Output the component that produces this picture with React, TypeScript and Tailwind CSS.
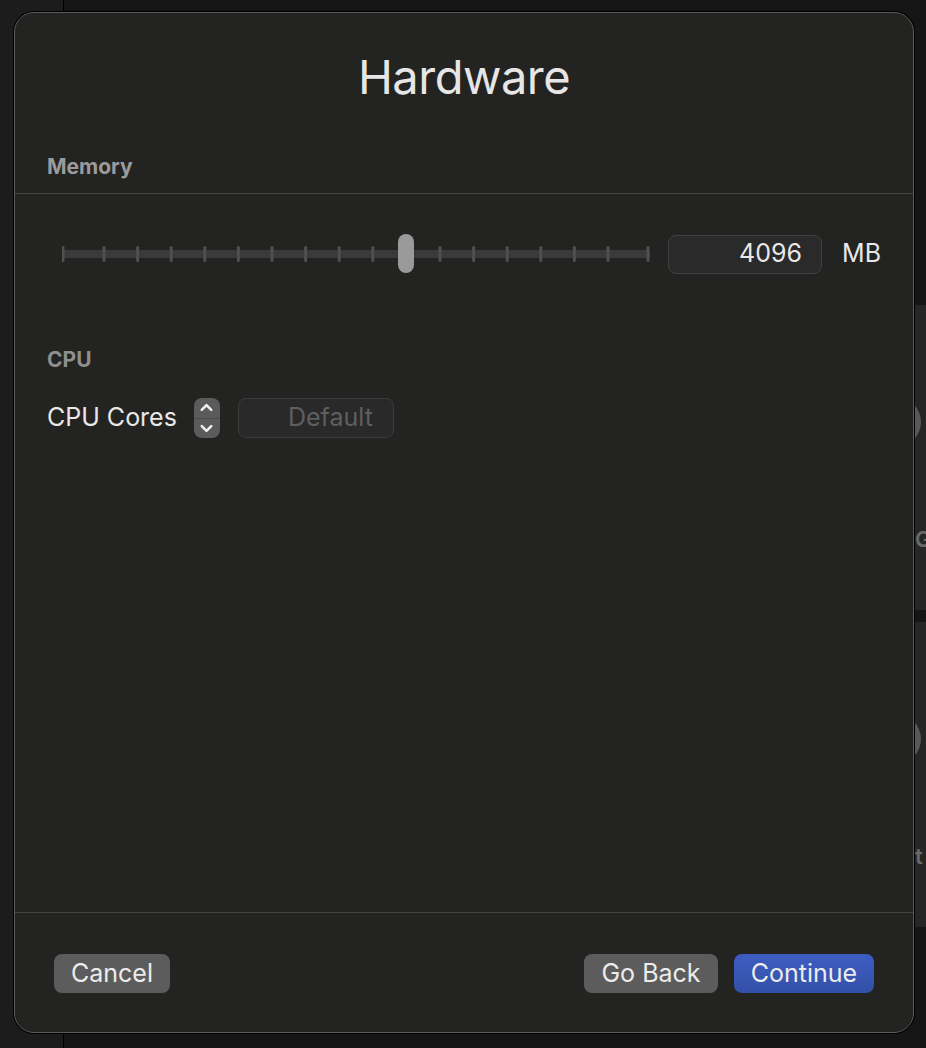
import { ChevronDown, ChevronUp } from "lucide-react";

const TICKS = [1, ...Array.from({ length: 16 }, (_, i) => 42 + i * 33.6), 586];

const MemorySlider = () => {
  return (
    <svg width="588" height="40" viewBox="0 0 588 40" className="ml-[15px] shrink-0">
      <rect x="0" y="16" width="588" height="8" rx="2" fill="#3a3a3a" />
      {TICKS.map((x, i) =>
        i === 10 ? null : (
          <rect key={i} x={x - 1.5} y="12" width="3" height="16" rx="1.5" fill="#505050" />
        )
      )}
      <rect x="336" y="0" width="16" height="39" rx="8" fill="#9a9a9a" />
    </svg>
  );
};

const Stepper = () => {
  return (
    <div className="flex h-[40px] w-[26px] flex-col overflow-hidden rounded-[8px] bg-[#5b5b5b] text-[#f0f0f0]">
      <div className="flex flex-1 items-center justify-center border-b border-[#4a4a4a]">
        <ChevronUp size={19} strokeWidth={3.2} />
      </div>
      <div className="flex flex-1 items-center justify-center">
        <ChevronDown size={19} strokeWidth={3.2} />
      </div>
    </div>
  );
};

const BackgroundCard = ({ letter, top }: { letter: string; top: string }) => {
  return (
    <div className={`mr-[-14px] flex h-[305px] w-[100px] flex-col rounded-l-xl bg-[#262626] ${top}`}>
      <div className="ml-[31px] mt-[92px] h-[50px] w-[50px] rounded-full bg-[#595959]" />
      <span className="ml-[75px] mt-[76px] text-[22px] font-semibold text-[#6a6a6a]">{letter}</span>
    </div>
  );
};

export default function App() {
  return (
    <div className="relative h-[1048px] w-[926px] overflow-hidden bg-[#151515] font-['Inter',sans-serif]">
      <div className="flex h-full">
        <div className="w-[64px] border-r border-black bg-[#1c1c1c]" />
        <div className="flex flex-1 flex-col items-end pt-[305px]">
          <BackgroundCard letter="G" top="" />
          <BackgroundCard letter="t" top="mt-[12px]" />
        </div>
      </div>

      <div className="absolute left-[14px] top-[12px] flex h-[1021px] w-[900px] flex-col rounded-[20px] border border-[#5a5a5a] bg-[#232322] shadow-[0_0_0_1px_#000]">
        <h1 className="pt-[36px] text-center text-[47px] leading-[56px] tracking-[-0.5px] text-[#e6e6e6]">
          Hardware
        </h1>

        <div className="mt-[48px] px-[32px] text-[21px] font-bold leading-[28px] text-[#9b9b9b]">Memory</div>
        <div className="mt-[12px] border-t border-[#444443]" />

        <div className="mt-[40px] flex items-center px-[32px]">
          <MemorySlider />
          <div className="ml-[18px] flex h-[39px] w-[155px] items-center justify-end rounded-[8px] border border-[#404040] bg-[#2a2a2a] pr-[19px] text-[25px] text-[#e8e8e8]">
            4096
          </div>
          <span className="ml-[20px] text-[25px] text-[#e8e8e8]">MB</span>
        </div>

        <div className="mt-[72px] px-[32px] text-[21px] font-bold leading-[28px] text-[#8f8f8f]">CPU</div>

        <div className="mt-[24px] flex items-center px-[32px]">
          <span className="text-[25px] text-[#e8e8e8]">CPU Cores</span>
          <div className="ml-[17px]">
            <Stepper />
          </div>
          <div className="ml-[18px] flex h-[40px] w-[156px] items-center justify-end rounded-[8px] border border-[#3c3c3c] bg-[#292929] pr-[20px] text-[25px] text-[#5f5f5f]">
            Default
          </div>
        </div>

        <div className="flex-1" />

        <div className="border-t border-[#444443]" />
        <div className="flex items-center px-[39px] pb-[39px] pt-[41px] text-[25px] text-[#ececec]">
          <button className="flex h-[39px] w-[116px] items-center justify-center rounded-[8px] bg-[#5c5c5c]">
            Cancel
          </button>
          <div className="flex-1" />
          <button className="flex h-[39px] w-[134px] items-center justify-center rounded-[8px] bg-[#5c5c5c]">
            Go Back
          </button>
          <button className="ml-[16px] flex h-[39px] w-[140px] items-center justify-center rounded-[8px] bg-linear-to-b from-[#3e5dc2] to-[#3350a8]">
            Continue
          </button>
        </div>
      </div>
    </div>
  );
}
